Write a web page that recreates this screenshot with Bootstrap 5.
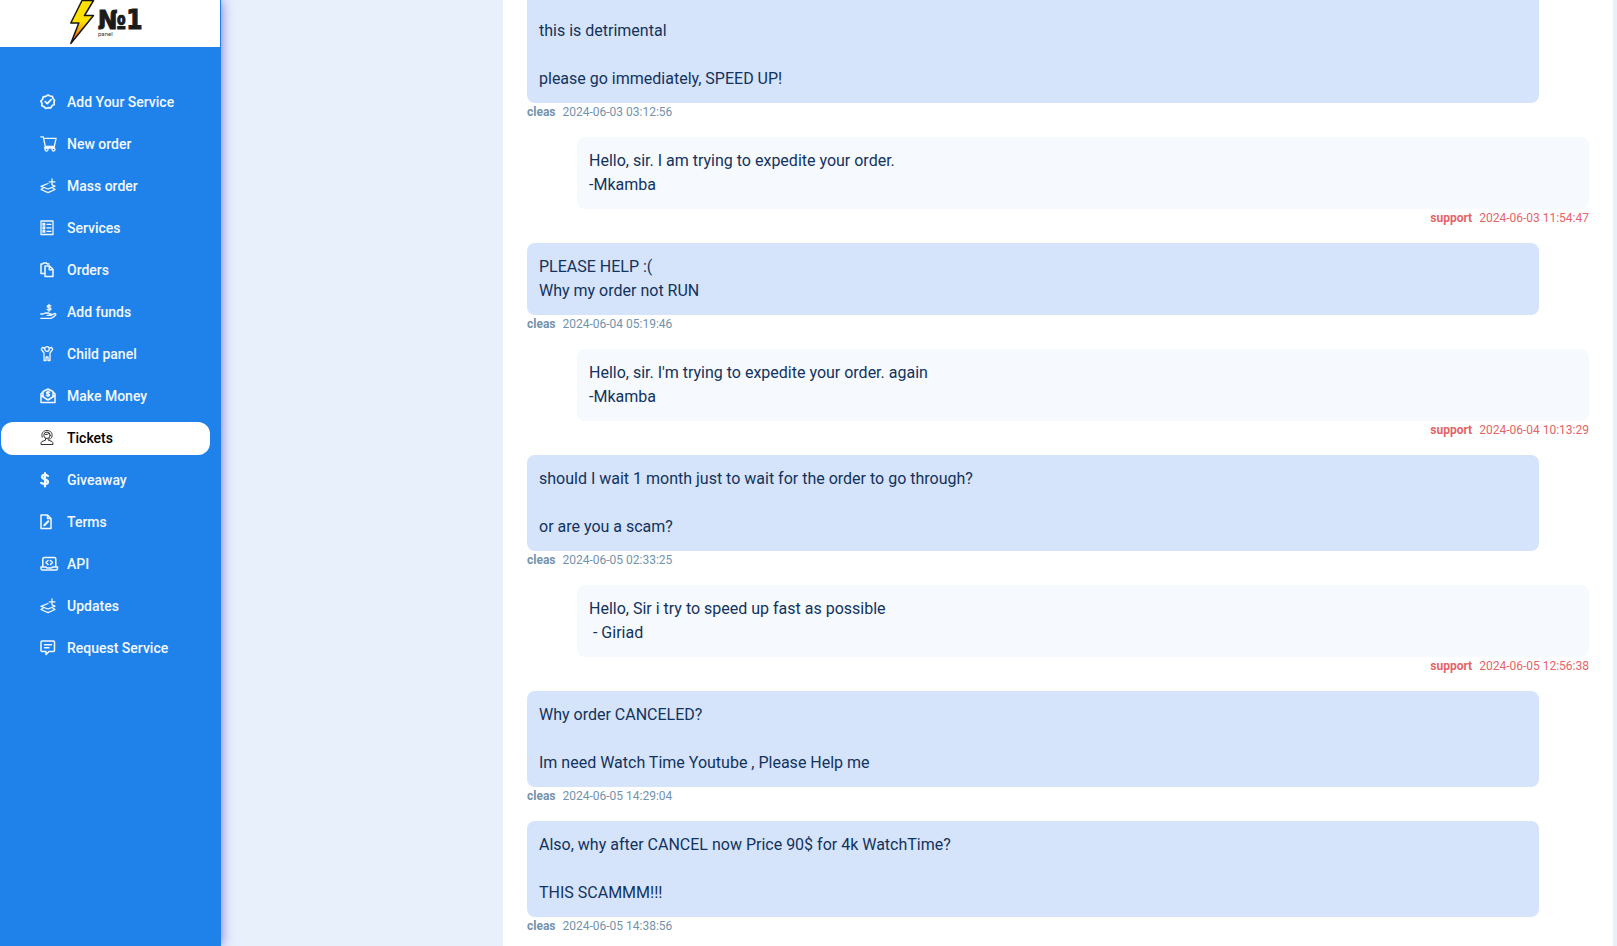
<!DOCTYPE html>
<html lang="en">
<head>
<meta charset="utf-8">
<meta name="viewport" content="width=device-width, initial-scale=1">
<title>Tickets</title>
<link href="https://cdn.jsdelivr.net/npm/bootstrap@5.3.0/dist/css/bootstrap.min.css" rel="stylesheet">
<style>
  body { font-family: Roboto, "Noto Sans", sans-serif; background: #e8f0fc; color: #12335c; }
  .sidebar { width: 221px; background: #1f82ea; box-shadow: 0 0 12px rgba(50, 40, 205, .65); z-index: 1; }
  .brand { height: 47px; margin-right: 1px; }
  .menu { padding: 39px 11px 0 1px; gap: 9px; }
  .menu .nav-link { height: 33px; padding: 0 0 2px 39px; border-radius: 12px; color: #f4f9ff; font-size: 14px; font-weight: 500; line-height: 30px; }
  .menu .nav-link.active { background: #fff; color: #000; }
  .menu-icon { width: 27px; height: 18px; flex: none; fill: none; stroke: currentColor; stroke-width: 1.3; stroke-linejoin: round; stroke-linecap: round; }
  .active .menu-icon { stroke-width: 1; color: #333; }
  .thread-area { padding: 0 4px 0 282px; }
  .thread { padding: 0 24px; }
  .bubble { padding: 12px; border-radius: 8px; font-size: 16px; line-height: 24px; white-space: pre-wrap; }
  .client .bubble { margin-right: 50px; background: #d5e3fb; }
  .support .bubble { margin-left: 50px; background: #f6f9fe; }
  .continued .bubble { padding-top: 19px; border-radius: 0 0 8px 8px; }
  .meta { margin-bottom: 16px; font-size: 12px; line-height: 18px; gap: 7px; }
  .client .meta { color: #7393ad; }
  .support .meta { color: #e46467; justify-content: flex-end; }
</style>
</head>
<body>
<svg class="d-none" aria-hidden="true">
  <symbol id="i-layers" viewBox="0 0 27 18"><path d="M8 6.500 1 9.300l7 2.700 7-2.800-2.500-1M3.500 10.800 1 12.500l7 3.200 7-3.200-2.500-1.700M12 2v5.500M9.200 4.800h5.800"/></symbol>
</svg>
<div class="d-flex min-vh-100">
  <aside class="sidebar flex-shrink-0">
    <a href="#" class="brand bg-white d-flex justify-content-center" aria-label="No1 panel">
      <svg width="80" height="47" viewBox="0 0 80 47">
        <defs><linearGradient id="bolt" x1="0" y1="0" x2="0" y2="1"><stop offset=".5" stop-color="#ffe000"/><stop offset=".8" stop-color="#f47b10"/></linearGradient></defs>
        <path d="M12 .5h11.500L14.500 15.500h9L.8 43.500l8-20.500H.8z" fill="url(#bolt)" stroke="#161616" stroke-width="1.500" stroke-linejoin="round"/>
        <text x="28" y="29" font-family="DejaVu Sans Condensed, DejaVu Sans, sans-serif" font-weight="700" font-size="26" fill="#1b1b1b" stroke="#1b1b1b">№1<tspan x="28" y="36" font-family="Roboto, sans-serif" font-weight="400" font-size="6" fill="#333" stroke="none">panel</tspan></text>
      </svg>
    </a>
    <nav class="menu nav flex-column">
      <a class="nav-link d-flex align-items-center" href="#"><svg class="menu-icon" viewBox="0 0 27 18"><path stroke-width="1.700" d="m8 2 2 1 2.300.3.700 2.200 1.500 1.700L14 9.300l.3 2.200-2.100 1L10.700 15 8 14.700 5.700 15.500 4 13.700l-2.200-1L2 10.300.9 8.200 2.500 6.500l.7-2.600L5.800 3.300z"/><path stroke-width="1.700" d="m5.200 8.700 2.100 2 3.800-4"/></svg>Add Your Service</a>
      <a class="nav-link d-flex align-items-center" href="#"><svg class="menu-icon" viewBox="0 0 27 18"><path d="M.8 1.800h2.500l2 9.700h9l1.800-8.200H3.600M5.300 11.500l-.8 1.500h10"/><circle cx="6.500" cy="14.500" r="1.500"/><circle cx="13.500" cy="14.500" r="1.500"/></svg>New order</a>
      <a class="nav-link d-flex align-items-center" href="#"><svg class="menu-icon"><use href="#i-layers"/></svg>Mass order</a>
      <a class="nav-link d-flex align-items-center" href="#"><svg class="menu-icon" viewBox="0 0 27 18"><path d="M1 2h12v13.500H1zM7 5.300h4M7 8.800h4M7 12.300h4M3 4.500h1.700v1.700H3zM3 8h1.700v1.700H3zM3 11.500h1.700v1.700H3z"/></svg>Services</a>
      <a class="nav-link d-flex align-items-center" href="#"><svg class="menu-icon" viewBox="0 0 27 18"><path stroke-width="1.500" d="M5 12.500H1V3h1.500l1-1h3l1 1H9M5 5h4.500L13 8.300v7.200H5zM9.300 5v3.700H13"/></svg>Orders</a>
      <a class="nav-link d-flex align-items-center" href="#"><svg class="menu-icon" viewBox="0 0 27 18"><path d="M.8 11h2.400l2-1h3.300l1.300 1h1.400v1.300H7M.8 15.300h9.500c2 0 4-2 5.500-3.600.3-1.400-1-1.500-2-.8l-2.600 1.400"/><path d="M10.800 3c-1-.9-3.600-.8-3.600.5 0 1.600 3.800.8 3.800 2.400 0 1.400-2.800 1.400-4 .4M9 1.300v7"/></svg>Add funds</a>
      <a class="nav-link d-flex align-items-center" href="#"><svg class="menu-icon" viewBox="0 0 27 18"><circle cx="7" cy="4" r="2.300"/><path d="M4.500 3 2.300 2.500 1.300 4.300 4 8v7.500h2V12h2v3.500h2V8l2.700-3.700-1-1.800L9.500 3"/></svg>Child panel</a>
      <a class="nav-link d-flex align-items-center" href="#"><svg class="menu-icon" viewBox="0 0 27 18"><path stroke-width="1.500" d="M3 9V4.500L8 2l5 2.500V9M3 5 1 6.800v8.700h14V6.800L13 5M1 8.500l7 4.500 7-4.500"/><path d="M9.700 5.200c-1-.7-3.300-.6-3.300.6 0 1.300 3.300.7 3.300 2.100 0 1.300-2.500 1.200-3.400.4M8 4v5.600"/></svg>Make Money</a>
      <a class="nav-link active d-flex align-items-center" aria-current="page" href="#"><svg class="menu-icon" viewBox="0 0 27 18"><circle cx="7" cy="6.300" r="3.200"/><path d="M2.200 8.200C1 4 3.500 1.500 7 1.500s6 2.500 4.800 6.700c-.4 1.300-2 2-3.800 2M5.500 9.500v1.700L2 12.500q-1.200.7-1 3h12q.2-2.300-1-3l-3.500-1.300M5.500 5.600q2 .2 3.200-1"/></svg>Tickets</a>
      <a class="nav-link d-flex align-items-center" href="#"><svg class="menu-icon" viewBox="0 0 27 18"><path stroke-width="2.200" d="M8 5C6 3.300 2 3.500 2 5.800 2 9 8 7.800 8 11c0 2.500-4.500 2.500-6.800.8M5 2v13.500"/></svg>Giveaway</a>
      <a class="nav-link d-flex align-items-center" href="#"><svg class="menu-icon" viewBox="0 0 27 18"><path stroke-width="1.500" d="M1 2h6.500L11 5.500v10H1zM7.500 2v3.500H11"/><path stroke-width="2" d="m4.300 12.200 4-4"/></svg>Terms</a>
      <a class="nav-link d-flex align-items-center" href="#"><svg class="menu-icon" viewBox="0 0 27 18"><path stroke-width="1.500" d="M2.800 12V4q0-1.500 1.500-1.500h10q1.500 0 1.500 1.500v8M1 12h5l1 1h4.500l1-1h5v1.500q0 1.500-1.500 1.500H2.500Q1 15 1 13.500zM8 5.500l-2 2 2 2M10.500 5.500l2 2-2 2"/></svg>API</a>
      <a class="nav-link d-flex align-items-center" href="#"><svg class="menu-icon"><use href="#i-layers"/></svg>Updates</a>
      <a class="nav-link d-flex align-items-center" href="#"><svg class="menu-icon" viewBox="0 0 27 18"><path stroke-width="1.500" d="M2 2h11.500q1 0 1 1v8.500q0 1-1 1H9l-3 3v-3H2q-1 0-1-1V3q0-1 1-1zM4.500 5.700h7M4.500 8.700h4.500"/></svg>Request Service</a>
    </nav>
  </aside>
  <main class="thread-area flex-grow-1 d-flex">
    <section class="thread bg-white flex-grow-1">
      <article class="client continued"><div class="bubble">this is detrimental

please go immediately, SPEED UP!</div><div class="meta d-flex"><strong>cleas</strong><time>2024-06-03 03:12:56</time></div></article>
      <article class="support"><div class="bubble">Hello, sir. I am trying to expedite your order.
-Mkamba</div><div class="meta d-flex"><strong>support</strong><time>2024-06-03 11:54:47</time></div></article>
      <article class="client"><div class="bubble">PLEASE HELP :(
Why my order not RUN</div><div class="meta d-flex"><strong>cleas</strong><time>2024-06-04 05:19:46</time></div></article>
      <article class="support"><div class="bubble">Hello, sir. I'm trying to expedite your order. again
-Mkamba</div><div class="meta d-flex"><strong>support</strong><time>2024-06-04 10:13:29</time></div></article>
      <article class="client"><div class="bubble">should I wait 1 month just to wait for the order to go through?

or are you a scam?</div><div class="meta d-flex"><strong>cleas</strong><time>2024-06-05 02:33:25</time></div></article>
      <article class="support"><div class="bubble">Hello, Sir i try to speed up fast as possible
 - Giriad</div><div class="meta d-flex"><strong>support</strong><time>2024-06-05 12:56:38</time></div></article>
      <article class="client"><div class="bubble">Why order CANCELED?

Im need Watch Time Youtube , Please Help me</div><div class="meta d-flex"><strong>cleas</strong><time>2024-06-05 14:29:04</time></div></article>
      <article class="client"><div class="bubble">Also, why after CANCEL now Price 90$ for 4k WatchTime?

THIS SCAMMM!!!</div><div class="meta d-flex mb-0"><strong>cleas</strong><time>2024-06-05 14:38:56</time></div></article>
    </section>
  </main>
</div>
<script src="https://cdn.jsdelivr.net/npm/bootstrap@5.3.0/dist/js/bootstrap.bundle.min.js"></script>
</body>
</html>
